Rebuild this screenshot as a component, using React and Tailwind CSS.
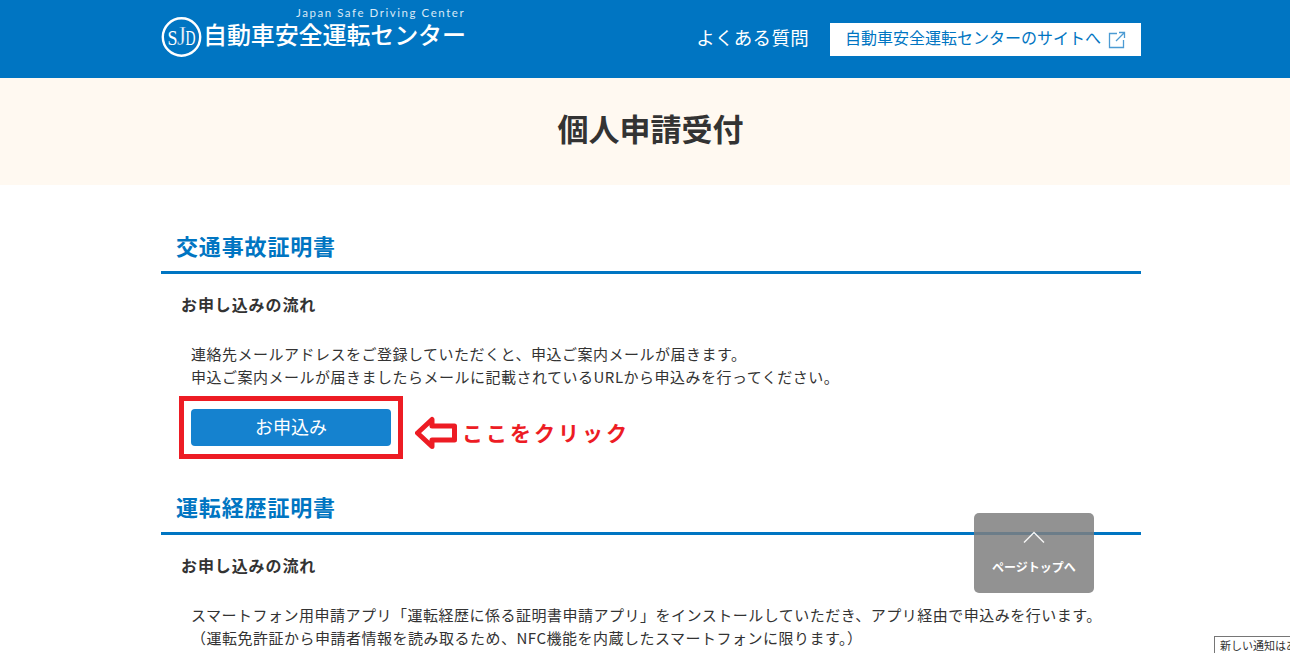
const F = { fontFamily: '"Noto Sans CJK JP", "Noto Sans", sans-serif' };

function Section({ title, lines, button }) {
  return (
    <section>
      <h2 className="h-[45px] pl-[15px] text-[22px] leading-[32px] font-bold tracking-[0.85px] text-[#0075c2] border-b-[3px] border-[#0075c2]">
        {title}
      </h2>
      <h3 className="mt-[18px] pl-5 text-[16px] leading-[24px] font-bold tracking-[0.9px] text-[#333]">お申し込みの流れ</h3>
      <div className="mt-[26px] pl-[30px] text-[15px] leading-[23px] tracking-[0.5px] text-[#333]">
        {lines.map((l) => (
          <p key={l} className="whitespace-nowrap">{l}</p>
        ))}
      </div>
      {button && (
        <div className="pl-[30px] mt-[21px] relative">
          <button className="w-[200px] h-[37px] rounded-[4px] bg-[#1582cf] text-white text-[18px] leading-[32px] pb-[3px] block">
            お申込み
          </button>
          <div className="absolute left-[18px] top-[-13px] w-[224px] h-[63px] border-[5px] border-[#ed1c24]" />
          <div className="absolute left-[254px] top-0 h-[48px] flex items-center gap-[5px]">
            <svg width="42" height="34" viewBox="0 0 42 34" className="shrink-0">
              <path d="M2.5 17 L17 3.5 V10 H39.5 V24 H17 V30.5 Z" fill="#fff" stroke="#ed1c24" strokeWidth="5" strokeLinejoin="round" />
            </svg>
            <span className="text-[21px] font-bold tracking-[3px] text-[#ed1c24] whitespace-nowrap">ここをクリック</span>
          </div>
        </div>
      )}
    </section>
  );
}

export default function App() {
  return (
    <div className="relative h-[653px] w-[1290px] overflow-hidden bg-white" style={F}>
      <header className="h-[78px] bg-[#0075c2]">
        <div className="ml-[161px] w-[980px] h-full flex items-start justify-between">
          <div className="flex items-start gap-[1px] pt-[16px] relative">
            <svg width="41" height="42" viewBox="0 0 41 42" className="shrink-0">
              <circle cx="20.5" cy="21" r="18.7" fill="none" stroke="#fff" strokeWidth="2.4" />
              <text x="11.5" y="28.5" textAnchor="middle" fontFamily='"Liberation Serif", serif' fontSize="21" fill="#fff" textLength="10" lengthAdjust="spacingAndGlyphs">S</text>
              <text x="20.5" y="29" textAnchor="middle" fontFamily='"Liberation Serif", serif' fontSize="28" fill="#fff" stroke="#0075c2" strokeWidth="0.5" textLength="9" lengthAdjust="spacingAndGlyphs">J</text>
              <text x="29.5" y="28.5" textAnchor="middle" fontFamily='"Liberation Serif", serif' fontSize="21" fill="#fff" textLength="10" lengthAdjust="spacingAndGlyphs">D</text>
            </svg>
            <span className="mt-[1px] text-[24px] leading-[34px] tracking-[-0.1px] font-medium text-white whitespace-nowrap">自動車安全運転センター</span>
            <span className="absolute left-[135px] top-[1px] mt-[5px] text-[11.5px] leading-[14px] tracking-[1.55px] text-[#d8e9f6] whitespace-nowrap" style={{ fontFamily: '"Lato", sans-serif' }}>Japan Safe Driving Center</span>
          </div>
          <div className="flex items-center gap-[21px] pt-[23px]">
            <a className="text-[18.5px] tracking-[0.3px] leading-[29px] pb-[4px] text-white whitespace-nowrap">よくある質問</a>
            <a className="w-[311px] h-[33px] bg-white flex items-center justify-center gap-[7px] text-[#0075c2] text-[16px] whitespace-nowrap">
              <span className="leading-[29px] pb-[4px]">自動車安全運転センターのサイトへ</span>
              <svg width="18" height="18" viewBox="0 0 18 18" fill="none" stroke="#4c9bd3" strokeWidth="1.3">
                <path d="M9 2.5H1.5V16.5H15.5V9" />
                <path d="M8 10L16.5 1.5M11 1.5H16.5V7" />
              </svg>
            </a>
          </div>
        </div>
      </header>

      <div className="h-[107px] bg-[#fff9f1] flex items-center justify-center pl-[11px] pb-[7px]">
        <h1 className="text-[31px] font-bold text-[#333]">個人申請受付</h1>
      </div>

      <main className="ml-[161px] w-[980px] pt-[44px]">
        <Section
          button
          title="交通事故証明書"
          lines={[
            "連絡先メールアドレスをご登録していただくと、申込ご案内メールが届きます。",
            "申込ご案内メールが届きましたらメールに記載されているURLから申込みを行ってください。",
          ]}
        />
        <div className="h-[44px]" />
        <Section
          title="運転経歴証明書"
          lines={[
            "スマートフォン用申請アプリ「運転経歴に係る証明書申請アプリ」をインストールしていただき、アプリ経由で申込みを行います。",
            "（運転免許証から申請者情報を読み取るため、NFC機能を内蔵したスマートフォンに限ります。）",
          ]}
        />
      </main>

      <div className="absolute left-[974px] top-[513px] w-[120px] h-[80px] rounded-[5px] bg-[#7f7f7f]/85 flex flex-col items-center text-white">
        <svg width="22" height="12" viewBox="0 0 22 12" fill="none" stroke="#fff" strokeWidth="1.5" className="mt-[18px] opacity-90">
          <path d="M1 11.5L11 1.5L21 11.5" />
        </svg>
        <span className="mt-[14px] text-[12px] leading-[20px] font-bold whitespace-nowrap">ページトップへ</span>
      </div>

      <div className="absolute left-[1214px] top-[636px] w-[90px] h-[24px] border border-[#767676] bg-white text-[11px] leading-[17px] pl-[5px] text-[#333] whitespace-nowrap overflow-hidden">
        新しい通知はあ
      </div>
    </div>
  );
}
